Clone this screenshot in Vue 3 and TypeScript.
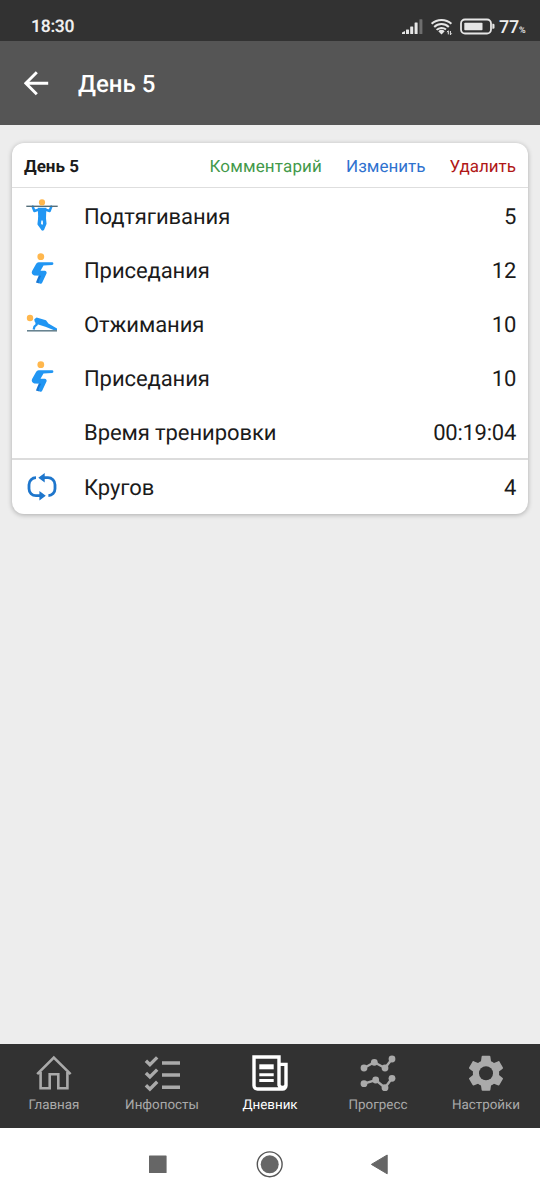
<script setup lang="ts">
type RowIcon = 'pullup' | 'squat' | 'pushup' | 'none'

interface Exercise {
  icon: RowIcon
  name: string
  value: string
}

interface Tab {
  id: 'home' | 'posts' | 'diary' | 'progress' | 'settings'
  label: string
}

const exercises: Exercise[] = [
  { icon: 'pullup', name: 'Подтягивания', value: '5' },
  { icon: 'squat', name: 'Приседания', value: '12' },
  { icon: 'pushup', name: 'Отжимания', value: '10' },
  { icon: 'squat', name: 'Приседания', value: '10' },
  { icon: 'none', name: 'Время тренировки', value: '00:19:04' },
]

const tabs: Tab[] = [
  { id: 'home', label: 'Главная' },
  { id: 'posts', label: 'Инфопосты' },
  { id: 'diary', label: 'Дневник' },
  { id: 'progress', label: 'Прогресс' },
  { id: 'settings', label: 'Настройки' },
]

const activeTab: Tab['id'] = 'diary'
</script>

<template>
  <div class="screen">
    <div class="status">
      <span class="clock">18:30</span>
      <svg class="status-icons" width="96" height="24" viewBox="400 14 96 24">
        <g fill="#e6e6e6">
          <path d="M402 34v-1.6l3-1.4v3z" />
          <rect x="406" y="29.4" width="3" height="4.6" rx=".5" />
          <rect x="410.2" y="26.6" width="3" height="7.4" rx=".5" />
          <rect x="414.6" y="22.6" width="3" height="11.4" rx=".5" />
          <rect x="419.4" y="19.2" width="3" height="14.8" rx=".5" fill="#6e6e6e" />
          <path d="M438.3 31.2a4.7 4.7 0 0 1 6.4 0l-3.2 3.2z" />
          <rect x="464.3" y="22.7" width="18.2" height="7.6" rx=".8" />
          <path d="M492.3 23.8h1a1.2 1.2 0 0 1 1.2 1.2v2.6a1.2 1.2 0 0 1-1.2 1.2h-1z" />
        </g>
        <g fill="none" stroke="#e6e6e6" stroke-width="2">
          <path d="M431.6 23.8a14.6 14.6 0 0 1 19.8 0M434.2 27a10.6 10.6 0 0 1 14.6 0M436.6 29.9a7 7 0 0 1 9.4-.4" />
          <rect x="461" y="19.5" width="30" height="14" rx="4" stroke-width="1.8" />
          <path d="M448.3 30.8v3.6m-1.4-2.2 1.4-1.4M450.4 31v3.8m1.3-1.4-1.3 1.4" stroke-width="1" />
        </g>
      </svg>
      <span class="battery">77<small>%</small></span>
    </div>

    <header class="appbar">
      <svg class="back" width="26" height="26" viewBox="0 0 26 26" fill="none" stroke="#fff" stroke-width="2.9">
        <path d="M24.2 13.2H2.2M12.8 2.2 1.8 13.2l11 11" />
      </svg>
      <h1>День 5</h1>
    </header>

    <main class="content">
      <section class="card">
        <div class="card-head">
          <strong>День 5</strong>
          <span class="action comment">Комментарий</span>
          <span class="action edit">Изменить</span>
          <span class="action remove">Удалить</span>
        </div>
        <div v-for="(item, i) in exercises" :key="i" class="row">
          <svg class="row-icon" width="36" height="36" viewBox="0 0 36 36">
            <template v-if="item.icon === 'pullup'">
              <g fill="none" stroke="#2196f3" stroke-linejoin="round" stroke-linecap="round">
                <path d="M8.7 8.6 10.4 13l5-1.6M27.3 8.6 25.6 13l-5-1.6" stroke-width="2.5" />
                <path d="M15.9 20 15.2 26l3.5 4.8M20.2 20l.6 5.6-2.2 5.2" stroke-width="3.5" />
              </g>
              <path d="M13.8 9.8h8.6l-.5 12.7h-7.6z" fill="#2196f3" />
              <path d="M2.3 8.3h31.4" stroke="#546e7a" stroke-width="1.4" />
              <circle cx="18" cy="4.4" r="3.1" fill="#ffb74d" />
            </template>
            <template v-else-if="item.icon === 'squat'">
              <circle cx="16.8" cy="4.7" r="3.4" fill="#ffb74d" />
              <path d="M15 23h4.5l-4.2 8.6-3.4-1.2z" fill="#1976d2" />
              <path
                d="M14.6 10.2H27.9a1.4 1.4 0 0 1 .2 2.8l-8.6.5-3 5.2h4.3a2 2 0 0 1 1.7 2.8l-4.2 9a1.9 1.9 0 0 1-3.6-1.4l2.4-5.3-6.8-.4a3 3 0 0 1-2.2-4.4l4.1-7.3a2.8 2.8 0 0 1 2.4-1.5z"
                fill="#2196f3"
              />
            </template>
            <template v-else-if="item.icon === 'pushup'">
              <circle cx="6" cy="12" r="3.2" fill="#ffb74d" />
              <path d="M10.3 13.2 12.6 11.6 22 14.2l2.4 3.4 8.6 4.8v1.7h-3.4l-8.2-3.4-8-2.5-2.8-2.7z" fill="#2196f3" />
              <path d="m12.5 15.5.2 3-2.2 2-.8 3" fill="none" stroke="#2196f3" stroke-width="2.3" />
              <path d="M3 24.8h30" stroke="#607d8b" stroke-width="1.5" />
            </template>
          </svg>
          <span class="name">{{ item.name }}</span>
          <span class="value">{{ item.value }}</span>
        </div>
        <div class="row total">
          <svg class="row-icon" width="36" height="36" viewBox="0 0 36 36">
            <g fill="none" stroke="#1e76cc" stroke-width="2.8">
              <path d="M12 8.7a7 7 0 0 0-7 7v4a7 7 0 0 0 7 7h4" />
              <path d="M19 8.7h5a7 7 0 0 1 7 7v4a7 7 0 0 1-6.6 7" />
            </g>
            <path d="m14.3 8.7 6.4-4.7v9.4zM21.8 26.7l-6.4-4.7v9.4z" fill="#1e76cc" />
          </svg>
          <span class="name">Кругов</span>
          <span class="value">4</span>
        </div>
      </section>
    </main>

    <nav class="tabs">
      <div v-for="tab in tabs" :key="tab.id" class="tab" :class="{ active: tab.id === activeTab }">
        <svg width="40" height="40" viewBox="0 0 40 40" fill="none" stroke="currentColor">
          <path
            v-if="tab.id === 'home'"
            d="M3.2 21.2 19.8 4.6l16.8 16.6M6.6 19v16.3h9.1v-14h8.6v14h9.1V19"
            stroke-width="2.6"
          />
          <template v-else-if="tab.id === 'posts'">
            <path d="m3.9 7.8 4 3.9 7.3-7.3M3.9 20l4 3.9 7.3-7.3M3.9 32.2l4 3.9 7.3-7.3" stroke-width="3.4" />
            <path d="M20 10h18M20 22h18M20 34.2h18" stroke-width="3.6" />
          </template>
          <template v-else-if="tab.id === 'diary'">
            <path d="M29 36H7.5A3.5 3.5 0 0 1 4 32.5V4h25v28.2a3.8 3.8 0 0 0 7 0V11.4h-7M29 36h3.5a3.5 3.5 0 0 0 3.5-3.5" stroke-width="3.4" />
            <path d="M9.3 13.8h14.4" stroke-width="5" />
            <path d="M9.3 21.7h14.4M9.3 27.5h14.4" stroke-width="3.1" />
          </template>
          <template v-else-if="tab.id === 'progress'">
            <path d="m6 15 10.3-5.7L27 15l7-9M6 30.7 17.7 27l9.3 7.7 7-9.4" stroke-width="2.4" />
            <g fill="currentColor" stroke="none">
              <circle cx="6" cy="15" r="3.4" />
              <circle cx="16.3" cy="9.3" r="3.4" />
              <circle cx="27" cy="15" r="3.4" />
              <circle cx="34" cy="6" r="3.4" />
              <circle cx="6" cy="30.7" r="3.4" />
              <circle cx="17.7" cy="27" r="3.4" />
              <circle cx="27" cy="34.7" r="3.4" />
              <circle cx="34" cy="25.3" r="3.4" />
            </g>
          </template>
          <g v-else stroke="none" transform="translate(-1 -.7) scale(1.75)">
            <path
              fill="currentColor"
              d="M19.43 12.98c.04-.32.07-.64.07-.98s-.03-.66-.07-.98l2.11-1.65c.19-.15.24-.42.12-.64l-2-3.46c-.12-.22-.39-.3-.61-.22l-2.49 1c-.52-.4-1.08-.73-1.69-.98l-.38-2.65C14.46 2.18 14.25 2 14 2h-4c-.25 0-.46.18-.49.42l-.38 2.65c-.61.25-1.17.59-1.69.98l-2.49-1c-.23-.09-.49 0-.61.22l-2 3.46c-.13.22-.07.49.12.64l2.11 1.65c-.04.32-.07.65-.07.98s.03.66.07.98l-2.11 1.65c-.19.15-.24.42-.12.64l2 3.46c.12.22.39.3.61.22l2.49-1c.52.4 1.08.73 1.69.98l.38 2.65c.03.24.24.42.49.42h4c.25 0 .46-.18.49-.42l.38-2.65c.61-.25 1.17-.59 1.69-.98l2.49 1c.23.09.49 0 .61-.22l2-3.46c.12-.22.07-.49-.12-.64z"
            />
            <circle cx="12" cy="12" r="4" fill="#323232" />
          </g>
        </svg>
        <span>{{ tab.label }}</span>
      </div>
    </nav>

    <div class="sysnav">
      <svg width="540" height="72" viewBox="0 0 540 72" fill="#666">
        <rect x="149" y="27.4" width="17.6" height="17.6" rx=".6" />
        <circle cx="269.7" cy="36.3" r="9" />
        <circle cx="269.7" cy="36.3" r="12.4" fill="none" stroke="#555" stroke-width="1.4" />
        <path d="M371.4 36.4 387.2 27v18.8z" stroke="#666" stroke-linejoin="round" />
      </svg>
    </div>
  </div>
</template>

<style>
body {
  margin: 0;
  background: #ededed;
}
</style>

<style scoped>
.screen {
  display: flex;
  flex-direction: column;
  width: 540px;
  height: 1200px;
  overflow: hidden;
  background: #ededed;
  font-family: Roboto, 'Noto Sans', sans-serif;
  color: #1b1b1b;
  text-rendering: geometricPrecision;
}
.status {
  display: flex;
  align-items: center;
  box-sizing: border-box;
  height: 41px;
  padding: 11px 15px 0 31px;
  background: #323232;
  color: #eee;
}
.clock {
  flex: 1;
  padding-top: 2px;
  font-size: 17.5px;
  font-weight: 600;
  line-height: 28px;
  letter-spacing: -0.3px;
}
.status-icons {
  flex: none;
  margin-right: 3px;
}
.battery {
  width: 26px;
  padding-top: 2px;
  font-size: 18px;
  font-weight: 500;
  letter-spacing: -0.3px;
  white-space: nowrap;
}
.battery small {
  font-size: 9px;
}
.appbar {
  display: flex;
  align-items: center;
  box-sizing: border-box;
  height: 84px;
  padding: 0 24px;
  background: #555;
  color: #fff;
}
.back {
  margin-right: 28px;
}
h1 {
  margin: 1px 0 0;
  font-size: 24px;
  font-weight: 500;
  line-height: 30px;
}
.content {
  flex: 1;
  padding: 18px 12px;
}
.card {
  border-radius: 12px;
  background: #fff;
  box-shadow: 0 1px 5px rgba(0, 0, 0, 0.28);
}
.card-head {
  display: flex;
  align-items: center;
  box-sizing: border-box;
  height: 45px;
  margin-bottom: 1px;
  padding: 4px 12px 0;
  border-bottom: 1px solid #dedede;
  font-size: 17px;
}
.card-head strong {
  flex: 1;
  font-weight: 700;
}
.action {
  margin-left: 24px;
}
.comment {
  color: #43994a;
  letter-spacing: 0.15px;
}
.edit {
  color: #2f72cf;
}
.remove {
  color: #b01717;
}
.row {
  display: flex;
  align-items: center;
  box-sizing: border-box;
  height: 54px;
  padding: 0 12px;
  font-size: 22px;
}
.row-icon {
  flex: none;
  margin-right: 24px;
}
.name {
  flex: 1;
  padding-top: 2px;
  letter-spacing: -0.08px;
}
.value {
  padding-top: 2px;
  letter-spacing: -0.25px;
}
.total {
  height: 56px;
  margin-top: -1px;
  border-top: 2px solid #dcdcdc;
}
.total .name,
.total .value {
  padding-top: 3px;
}
.tabs {
  display: grid;
  grid-template-columns: repeat(5, 108px);
  height: 84px;
  background: #323232;
}
.tab {
  display: flex;
  flex-direction: column;
  align-items: center;
  padding-top: 9px;
  color: #aaa;
  font-size: 13.4px;
  line-height: 25px;
}
.tab.active {
  color: #fff;
}
.sysnav {
  height: 72px;
  background: #fff;
}
.sysnav svg {
  display: block;
}
</style>
